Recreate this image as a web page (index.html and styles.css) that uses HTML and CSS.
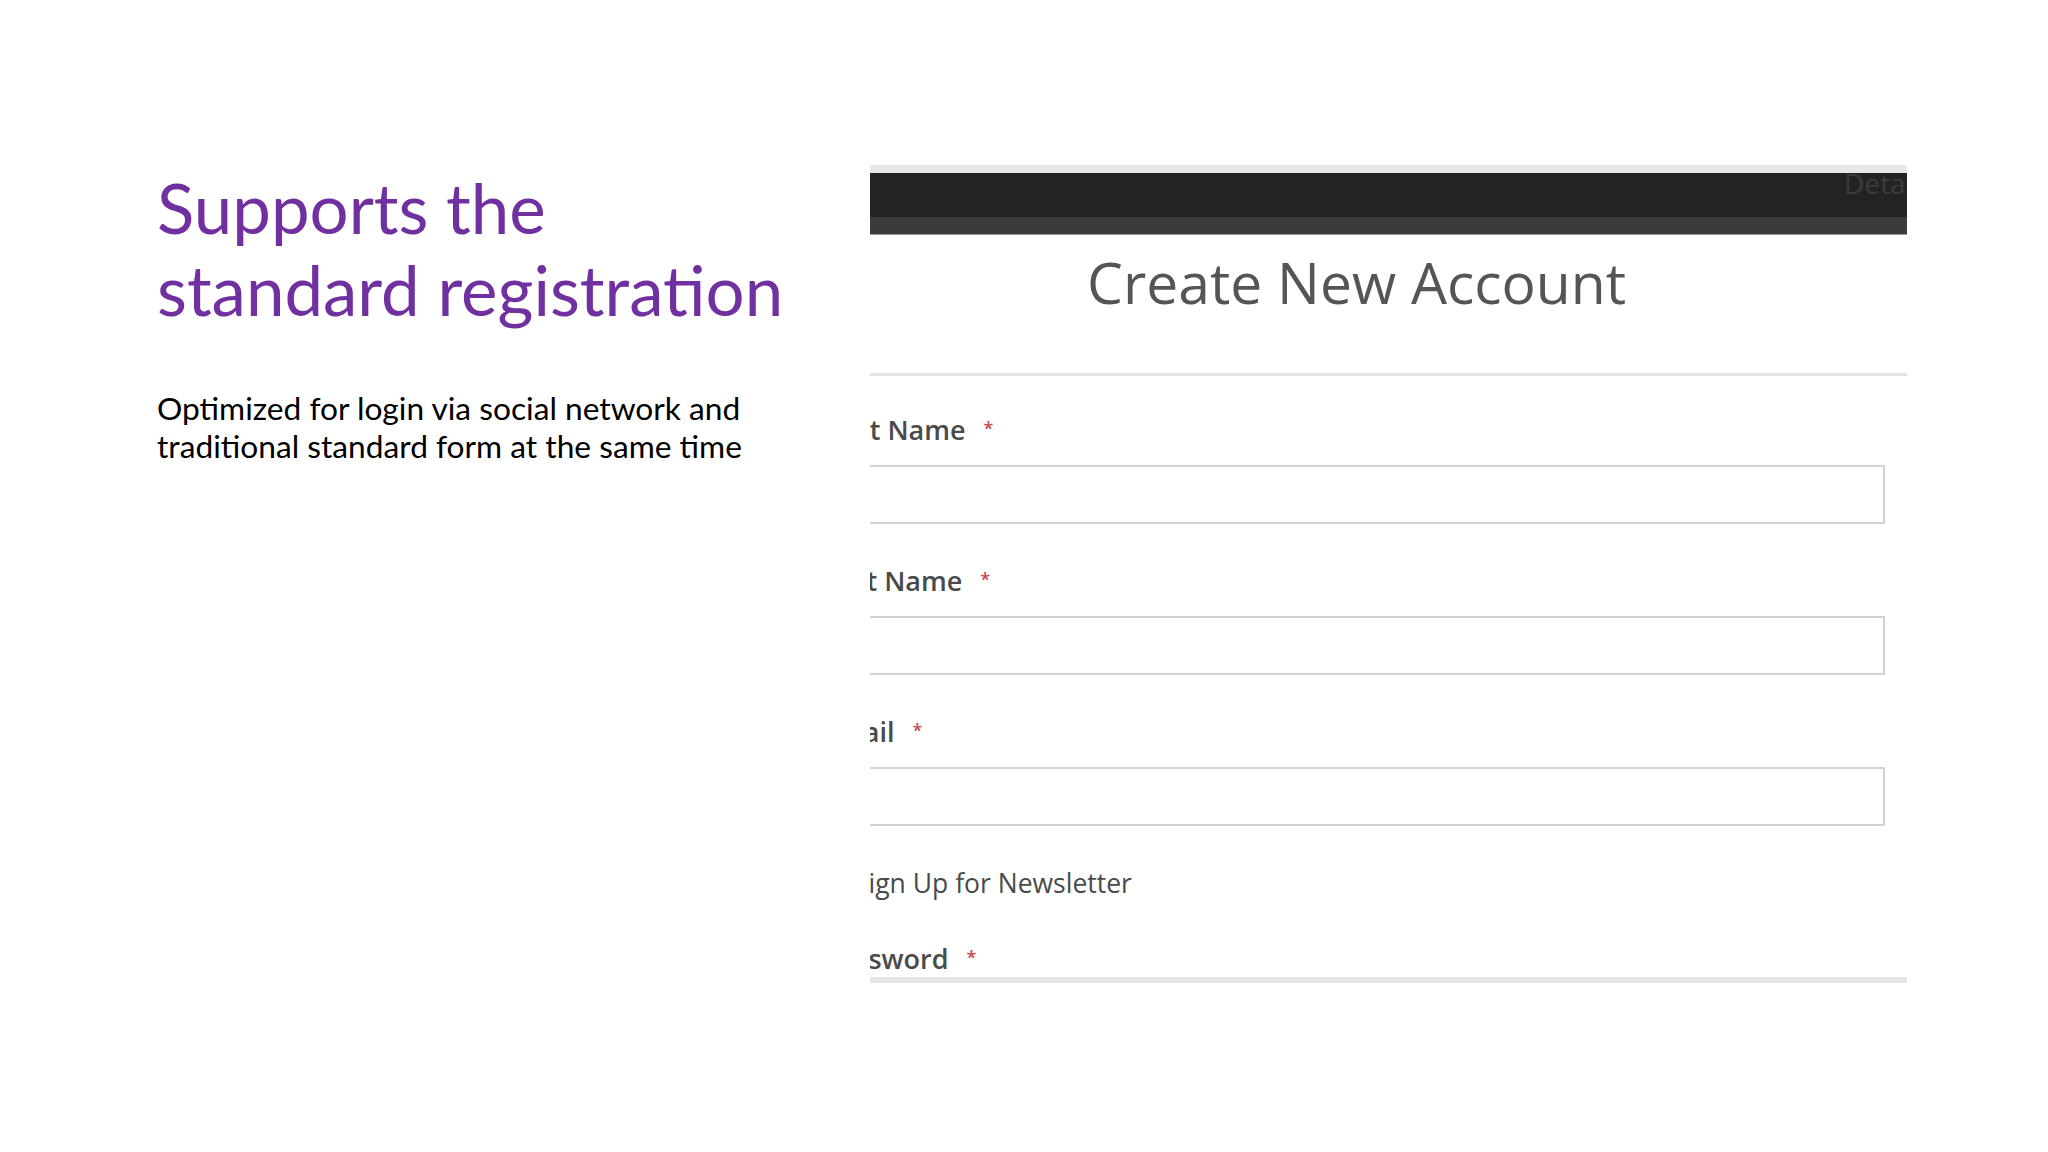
FILE: index.html
```html
<!DOCTYPE html>
<html lang="en">
<head>
    <meta charset="UTF-8">
    <meta name="viewport" content="width=device-width, initial-scale=1.0">
    <title>Supports the standard registration</title>
    <link rel="stylesheet" href="styles.css">
</head>
<body>
    <div class="slide">
        <!-- Text column -->
        <div class="intro">
            <h1 class="intro-title">Supports the<br>standard registration</h1>
            <p class="intro-text">Optimized for login via social network and<br>traditional standard form at the same time</p>
        </div>

        <!-- Screenshot of the form -->
        <div class="shot">
            <div class="shot-strip"></div>
            <div class="shot-bar"><span class="shot-link">Details</span></div>
            <div class="shot-subbar"></div>
            <h2 class="shot-title">Create New Account</h2>
            <div class="shot-rule"></div>
            <div class="shot-form">
                <label class="field-label">First Name <span class="req">*</span></label>
                <div class="field-input"></div>
                <label class="field-label">Last Name <span class="req">*</span></label>
                <div class="field-input"></div>
                <label class="field-label">Email <span class="req">*</span></label>
                <div class="field-input"></div>
                <div class="field-check"><span class="checkbox"></span>Sign Up for Newsletter</div>
                <label class="field-label last">Password <span class="req">*</span></label>
                <div class="field-cut"></div>
            </div>
        </div>
    </div>
</body>
</html>
```

FILE: styles.css
```css
body {
    margin: 0;
    padding: 0;
    background-color: #fff;
    overflow: hidden;
}
.slide {
    width: 2048px;
    height: 1152px;
    display: flex;
    align-items: flex-start;
}
.intro {
    width: 713px;
    padding-left: 157px;
    padding-top: 167px;
    font-family: Lato, "Open Sans", sans-serif;
}
.intro-title {
    margin: 0;
    font-size: 69px;
    line-height: 82px;
    font-weight: normal;
    color: #7030a0;
}
.intro-text {
    margin: 58px 0 0 0;
    font-size: 31.7px;
    line-height: 38px;
    color: #000;
}
.shot {
    width: 1037px;
    margin-top: 165px;
    overflow: hidden;
    font-family: "Open Sans", sans-serif;
    background-color: #fff;
}
.shot-strip {
    height: 8px;
    background-color: #e8e8e8;
}
.shot-bar {
    height: 44px;
    background-color: #232323;
    text-align: right;
    overflow: hidden;
}
.shot-link {
    display: inline-block;
    margin-right: -26px;
    margin-top: -9px;
    font-size: 28px;
    color: #3c3c3c;
}
.shot-subbar {
    height: 17px;
    background-color: #3b3b3b;
    border-bottom: 1px solid #9a9a9a;
}
.shot-title {
    margin: 7px 0 0 0;
    padding-left: 217px;
    font-size: 57px;
    line-height: 80px;
    font-weight: normal;
    color: #555;
}
.shot-rule {
    height: 3px;
    margin-top: 51px;
    background-color: #e3e3e3;
}
.shot-form {
    margin-left: -47px;
    padding-top: 37px;
    padding-right: 22px;
}
.field-label {
    display: block;
    height: 34px;
    font-size: 27px;
    line-height: 34px;
    font-weight: 600;
    color: #4a4a4a;
    margin-bottom: 18px;
}
.req {
    color: #c8484f;
    font-size: 18px;
    line-height: 1;
    margin-left: 11px;
    vertical-align: 5px;
}
.field-input {
    height: 55px;
    border: 2px solid #d2d2d2;
    margin-bottom: 40px;
}
.field-check {
    display: flex;
    align-items: center;
    height: 34px;
    font-size: 26.5px;
    line-height: 34px;
    color: #4a4a4a;
    margin-bottom: 42px;
}
.checkbox {
    width: 20px;
    height: 20px;
    margin-right: 9px;
    border: 1px solid #bbb;
}
.field-label.last {
    margin-bottom: 1px;
}
.field-cut {
    height: 6px;
    margin-right: -22px;
    background-color: #e6e6e6;
}
```
